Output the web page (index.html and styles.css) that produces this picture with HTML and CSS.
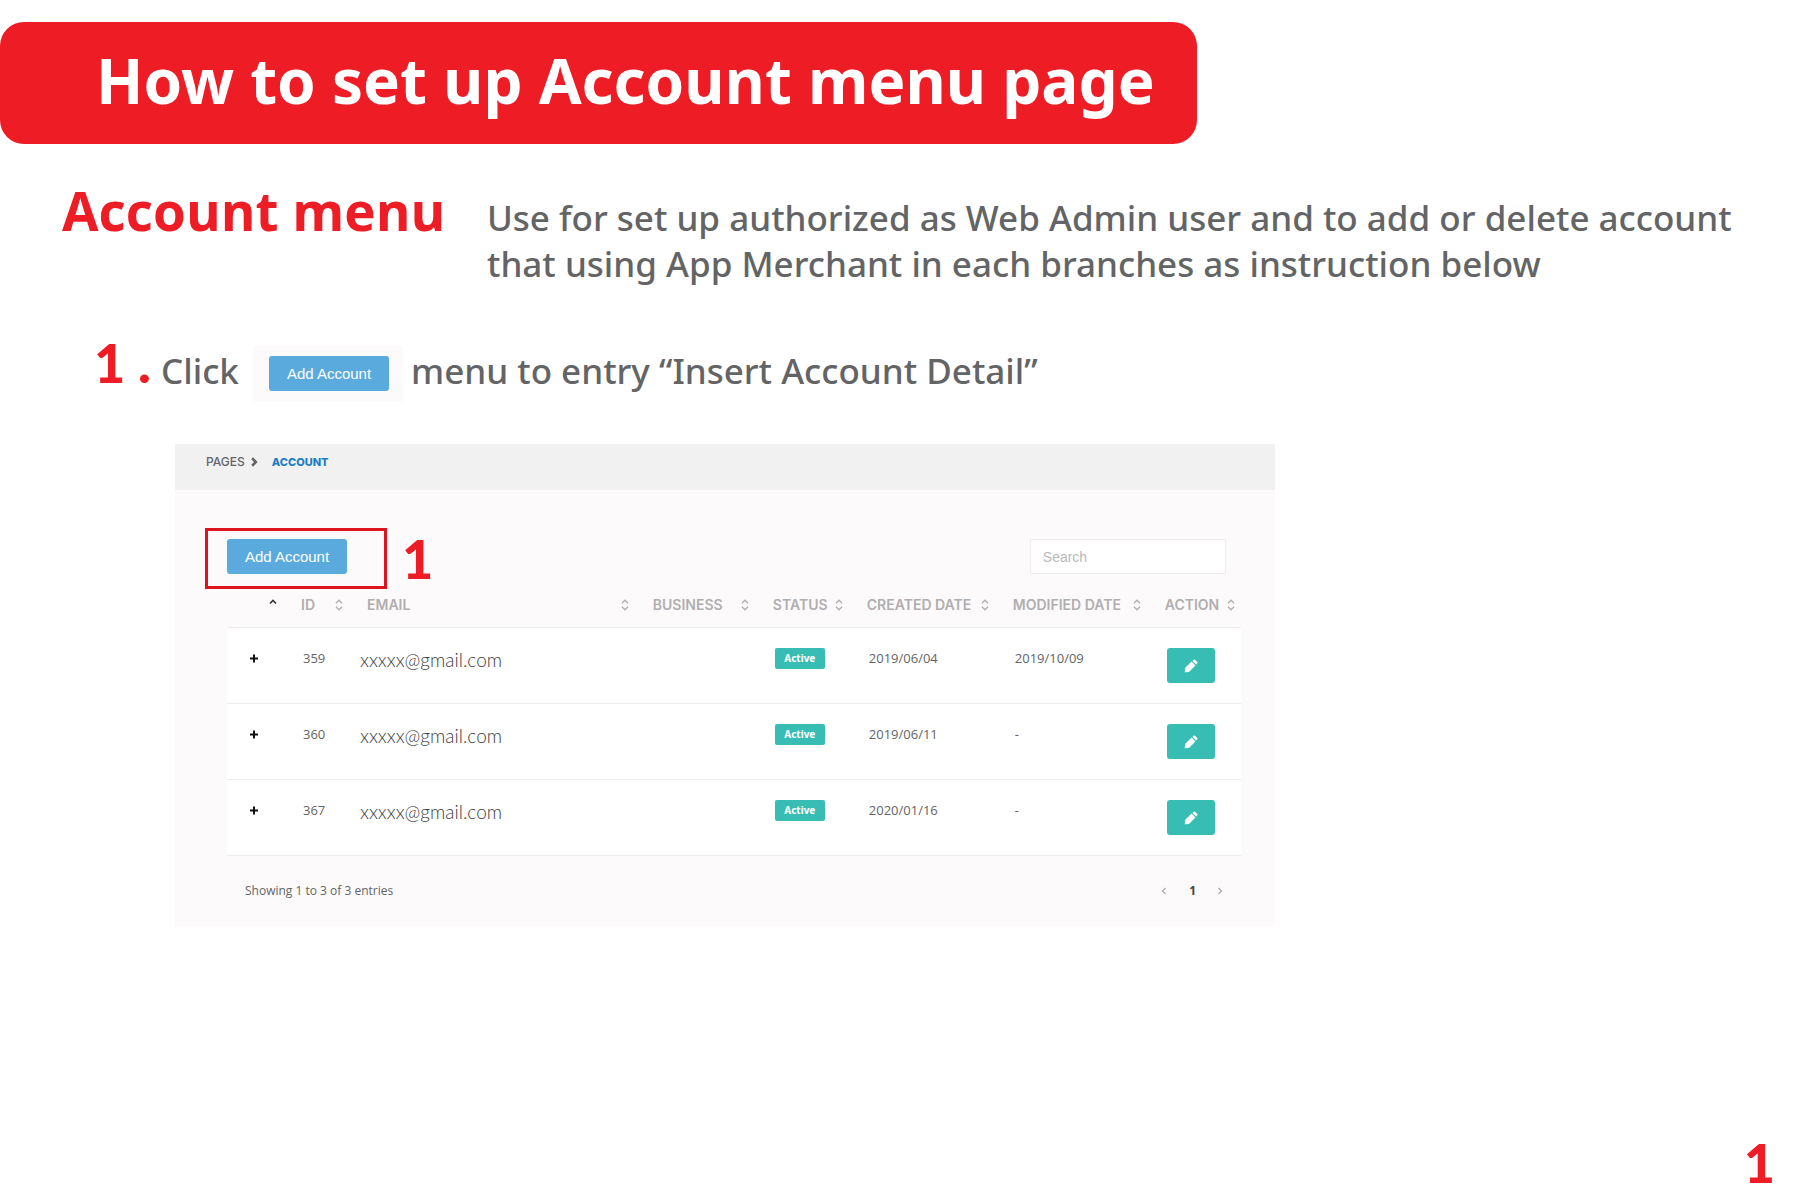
FILE: index.html
```html
<!DOCTYPE html>
<html lang="en">
<head>
<meta charset="utf-8">
<title>How to set up Account menu page</title>
<link rel="stylesheet" href="styles.css">
</head>
<body>
<svg class="sprite" aria-hidden="true">
  <symbol id="sort" viewBox="0 0 8 12"><path d="M1 4.2 4 1.2 7 4.2M1 7.8 4 10.8 7 7.8"/></symbol>
  <symbol id="sort-up" viewBox="0 0 8 12"><path d="M1 4.5 4 1.5 7 4.5"/></symbol>
  <symbol id="left" viewBox="0 0 6 8"><path d="M4.5 1 1.5 4 4.5 7"/></symbol>
  <symbol id="right" viewBox="0 0 6 8"><path d="M1.5 1 4.5 4 1.5 7"/></symbol>
  <symbol id="plus" viewBox="0 0 8 8"><path d="M4 0V8M0 4H8"/></symbol>
  <symbol id="pencil" viewBox="0 0 14 14"><path d="M.8 13.2 1 9 7.6 2.6 11.4 6.4 5 13ZM8.4 1.9 9.6.8Q10.4.3 11.2.9L13.1 2.8Q13.7 3.6 13.2 4.4L12.1 5.6Z"/></symbol>
</svg>

<header class="banner"><h1 class="banner-title">How to set up Account menu page</h1></header>

<main>
  <section class="intro">
    <h2 class="intro-title">Account menu</h2>
    <p class="intro-text">Use for set up authorized as Web Admin user and to add or delete account<br>that using App Merchant in each branches as instruction below</p>
  </section>

  <section class="step">
    <span class="number step-number">1</span>
    <span class="number step-dot">.</span>
    <span class="step-text step-click">Click</span>
    <span class="step-sample"><button class="button" type="button">Add Account</button></span>
    <span class="step-text">menu to entry “Insert Account Detail”</span>
  </section>

  <section class="panel">
    <nav class="crumbs" aria-label="Breadcrumb">
      <a class="crumb" href="#">PAGES</a>
      <svg class="crumb-arrow" aria-hidden="true"><use href="#right"/></svg>
      <a class="crumb crumb-current" href="#">ACCOUNT</a>
    </nav>
    <div class="panel-body">
      <div class="toolbar">
        <div class="marked">
          <button class="button" type="button">Add Account</button>
          <span class="mark-box"></span>
          <span class="number mark-number">1</span>
        </div>
        <input class="search" type="search" placeholder="Search" aria-label="Search">
      </div>
      <table class="accounts">
        <colgroup><col class="col-more"><col class="col-id"><col><col class="col-business"><col class="col-status"><col class="col-created"><col class="col-modified"><col class="col-action"></colgroup>
        <thead>
          <tr>
            <th><div class="head"><span></span><svg class="sort sort-active" aria-hidden="true"><use href="#sort-up"/></svg></div></th>
            <th><div class="head">ID<svg class="sort" aria-hidden="true"><use href="#sort"/></svg></div></th>
            <th><div class="head">EMAIL<svg class="sort" aria-hidden="true"><use href="#sort"/></svg></div></th>
            <th><div class="head">BUSINESS<svg class="sort" aria-hidden="true"><use href="#sort"/></svg></div></th>
            <th><div class="head">STATUS<svg class="sort" aria-hidden="true"><use href="#sort"/></svg></div></th>
            <th><div class="head">CREATED DATE<svg class="sort" aria-hidden="true"><use href="#sort"/></svg></div></th>
            <th><div class="head">MODIFIED DATE<svg class="sort" aria-hidden="true"><use href="#sort"/></svg></div></th>
            <th><div class="head head-last">ACTION<svg class="sort" aria-hidden="true"><use href="#sort"/></svg></div></th>
          </tr>
        </thead>
        <tbody>
          <tr>
            <td class="more"><svg class="plus" aria-hidden="true"><use href="#plus"/></svg></td>
            <td>359</td><td class="email">xxxxx@gmail.com</td><td></td>
            <td><span class="badge">Active</span></td><td>2019/06/04</td><td>2019/10/09</td>
            <td><button class="edit" type="button" aria-label="Edit"><svg class="pencil" aria-hidden="true"><use href="#pencil"/></svg></button></td>
          </tr>
          <tr>
            <td class="more"><svg class="plus" aria-hidden="true"><use href="#plus"/></svg></td>
            <td>360</td><td class="email">xxxxx@gmail.com</td><td></td>
            <td><span class="badge">Active</span></td><td>2019/06/11</td><td>-</td>
            <td><button class="edit" type="button" aria-label="Edit"><svg class="pencil" aria-hidden="true"><use href="#pencil"/></svg></button></td>
          </tr>
          <tr>
            <td class="more"><svg class="plus" aria-hidden="true"><use href="#plus"/></svg></td>
            <td>367</td><td class="email">xxxxx@gmail.com</td><td></td>
            <td><span class="badge">Active</span></td><td>2020/01/16</td><td>-</td>
            <td><button class="edit" type="button" aria-label="Edit"><svg class="pencil" aria-hidden="true"><use href="#pencil"/></svg></button></td>
          </tr>
        </tbody>
      </table>
      <div class="summary">
        <span>Showing 1 to 3 of 3 entries</span>
        <nav class="pager" aria-label="Pages">
          <a class="pager-link" href="#" aria-label="Previous"><svg class="pager-arrow" aria-hidden="true"><use href="#left"/></svg></a>
          <a class="pager-link pager-current" href="#">1</a>
          <a class="pager-link" href="#" aria-label="Next"><svg class="pager-arrow" aria-hidden="true"><use href="#right"/></svg></a>
        </nav>
      </div>
    </div>
  </section>
</main>

<footer class="page-footer"><span class="number page-number">1</span></footer>
</body>
</html>
```

FILE: styles.css
```css
* { box-sizing: border-box; }

body {
  margin: 0;
  min-height: 100vh;
  display: flex;
  flex-direction: column;
  background: #fff;
  color: #636466;
  font-family: "Open Sans", "Noto Sans", sans-serif;
}

h1, h2, p { margin: 0; }
a { color: inherit; text-decoration: none; }
svg { display: block; fill: none; stroke: currentColor; }
.sprite { position: absolute; width: 0; height: 0; }

.banner {
  width: 66.5%;
  margin-top: 22px;
  padding: 18px 0 24px 96px;
  border-radius: 24px;
  background: #ee1c25;
  color: #fff;
}
.banner-title { font: 700 62px/80px "Noto Sans", sans-serif; white-space: nowrap; }

.intro {
  display: grid;
  grid-template-columns: 425px 1fr;
  align-items: baseline;
  padding: 44px 0 0 62px;
}
.intro-title { color: #ee1c25; font-size: 53px; font-weight: 700; line-height: 46px; }
.intro-text { font: 500 35px/46px "Noto Sans", sans-serif; white-space: nowrap; }

.number { color: #ee1c25; font: 900 54px/34px Lato, sans-serif; }

.step { display: flex; align-items: flex-start; padding: 59px 0 0 94px; }
.step-number { width: 44px; }
.step-dot { width: 23px; }
.step-text { font: 500 35px/50px "Noto Sans", sans-serif; white-space: nowrap; }
.step-click { width: 92px; }
.step-sample { margin-right: 8px; padding: 10px 14px 11px 16px; background: #fcfafb; }

.button {
  display: block;
  width: 120px;
  height: 35px;
  padding: 0;
  border: 0;
  border-radius: 3px;
  background: #5aaadd;
  color: #fff;
  font: 15px/35px "Liberation Sans", Arial, sans-serif;
}

.panel { width: 61.1%; margin: 42px 0 0 175px; background: #fcfafb; }
.crumbs {
  display: flex;
  align-items: center;
  height: 46px;
  padding: 0 31px 10px;
  background: #f1f1f1;
  font: 500 12px/16px Inter, sans-serif;
}
.crumb-arrow { width: 8px; height: 10px; margin: 0 14px 0 5px; stroke-width: 2; }
.crumb-current { color: #1c7fc4; font-size: 11px; font-weight: 800; }

.panel-body { padding: 49px 34px 0 52px; }
.toolbar { display: flex; justify-content: space-between; padding: 0 15px 8px 0; }
.marked { position: relative; }
.mark-box {
  position: absolute;
  left: -22px;
  top: -11px;
  width: 182px;
  height: 61px;
  border: 3px solid #dd141d;
}
.mark-number { position: absolute; left: 175px; top: 3px; }
.search {
  width: 196px;
  height: 35px;
  padding: 0 12px;
  border: 1px solid #efedee;
  border-radius: 2px;
  background: #fff;
  font: 14px/20px "Liberation Sans", Arial, sans-serif;
}
.search::placeholder { color: #b9b9b9; opacity: 1; }

.accounts {
  width: 100%;
  table-layout: fixed;
  border-collapse: separate;
  border-spacing: 0;
  font-size: 13px;
  line-height: 21px;
}
.col-more { width: 60px; }
.col-id { width: 66px; }
.col-business { width: 120px; }
.col-status { width: 94px; }
.col-created { width: 146px; }
.col-modified { width: 152px; }
.col-action { width: 90px; }

.accounts th {
  height: 46px;
  padding: 0;
  border-bottom: 1px solid #ececec;
  color: #b0aeaf;
  font: 600 14px/20px Inter, sans-serif;
  white-space: nowrap;
}
.head { display: flex; align-items: center; justify-content: space-between; padding: 0 10px 0 14px; }
.head-last { padding-right: 6px; }
.sort { width: 8px; height: 12px; stroke-width: 1.3; }
.sort-active { color: #333; stroke-width: 1.6; }

.accounts td {
  height: 76px;
  padding: 20px 0 20px 16px;
  border-bottom: 1px solid #ececec;
  background: #fff;
  vertical-align: top;
}
.accounts .more { padding-left: 23px; color: #111; }
.plus { width: 8px; height: 21px; stroke-width: 2; }
.accounts .email { padding: 21px 0 0 7px; color: #3c3c3e; font: 300 19px/21px Lato, sans-serif; }
.badge {
  display: block;
  width: 50px;
  border-radius: 2px;
  background: #37bdb3;
  color: #fff;
  font: 700 10px/21px "Noto Sans", sans-serif;
  text-align: center;
}
.edit {
  display: flex;
  align-items: center;
  justify-content: center;
  width: 48px;
  height: 35px;
  padding: 0;
  border: 0;
  border-radius: 3px;
  background: #37bdb3;
  color: #fff;
}
.pencil { width: 14px; height: 14px; fill: currentColor; stroke: none; }

.summary {
  display: flex;
  align-items: center;
  justify-content: space-between;
  height: 70px;
  padding: 0 16px 0 18px;
  font-size: 12px;
  line-height: 20px;
}
.pager { display: flex; align-items: center; gap: 20px; color: #aaa; }
.pager-link { width: 8px; text-align: center; }
.pager-current { color: #444; font-weight: 700; }
.pager-arrow { width: 6px; height: 8px; stroke-width: 1.2; }

.page-footer { margin-top: auto; padding: 24px 25px 10px 0; text-align: right; }
.page-number { display: block; line-height: 54px; }
```
